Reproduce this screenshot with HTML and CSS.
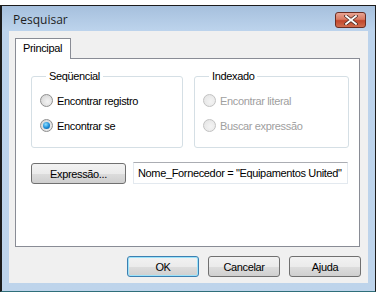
FILE: index.html
```html
<!DOCTYPE html>
<html lang="pt">
<head>
    <meta charset="UTF-8">
    <title>Pesquisar</title>
    <link rel="stylesheet" href="styles.css">
</head>
<body>
    <div class="window">
        <div class="titlebar">
            <span class="title">Pesquisar</span>
            <span class="close">
                <svg width="14" height="10" viewBox="0 0 14 10">
                    <path d="M2 1 L12 9 M12 1 L2 9" stroke="#4a2a22" stroke-width="3.4" stroke-linecap="square"/>
                    <path d="M2 1 L12 9 M12 1 L2 9" stroke="#fff" stroke-width="1.8" stroke-linecap="square"/>
                </svg>
            </span>
        </div>
        <div class="client">
            <div class="tabs">
                <div class="tab">Principal</div>
            </div>
            <div class="tab-page">
                <div class="groups">
                    <fieldset class="group">
                        <legend>Seqüencial</legend>
                        <label class="option"><span class="radio"></span>Encontrar registro</label>
                        <label class="option"><span class="radio checked"></span>Encontrar se</label>
                    </fieldset>
                    <fieldset class="group disabled">
                        <legend>Indexado</legend>
                        <label class="option"><span class="radio"></span>Encontrar literal</label>
                        <label class="option"><span class="radio"></span>Buscar expressão</label>
                    </fieldset>
                </div>
                <div class="expr-row">
                    <button class="btn expr-btn">Expressão...</button>
                    <div class="expr-field">Nome_Fornecedor = "Equipamentos United"</div>
                </div>
            </div>
            <div class="actions">
                <button class="btn default">OK</button>
                <button class="btn">Cancelar</button>
                <button class="btn">Ajuda</button>
            </div>
        </div>
    </div>
</body>
</html>
```

FILE: styles.css
```css
body {
    margin: 0;
    background: #fff;
    font-family: "Liberation Sans", Arial, sans-serif;
    font-size: 11px;
    letter-spacing: -0.35px;
    color: #000;
}
.window {
    margin-top: 5px;
    width: 376px;
    height: 287px;
    box-sizing: border-box;
    border: 1px solid #1c1c1c;
    border-left-width: 2px;
    border-bottom-color: #2f6f7a;
    background: linear-gradient(#a6c0dd, #bcd3ec 24px, #bed4eb);
    display: flex;
    flex-direction: column;
    padding: 0 7px 8px 7px;
}
.titlebar {
    height: 25px;
    display: flex;
    align-items: center;
    justify-content: space-between;
}
.title {
    font-family: "Open Sans", "Liberation Sans", sans-serif;
    font-size: 12px;
    letter-spacing: 0;
    padding-left: 4px;
    padding-top: 1px;
    color: #1e1e1e;
}
.close {
    width: 31px;
    height: 16px;
    box-sizing: border-box;
    margin-top: 2px;
    margin-right: 2px;
    border: 1px solid #6b2d22;
    border-radius: 3px;
    background: linear-gradient(#e8a493, #d97a62 45%, #c2462b 55%, #d06e4f);
    display: flex;
    align-items: center;
    justify-content: center;
}
.client {
    flex: 1;
    background: #f0f0f0;
    padding: 7px 7px 0 6px;
    display: flex;
    flex-direction: column;
}
.tabs {
    display: flex;
    height: 20px;
}
.tab {
    width: 56px;
    box-sizing: border-box;
    border: 1px solid #898c95;
    border-bottom: none;
    background: #fff;
    padding: 3px 0 0 7px;
    position: relative;
    z-index: 1;
    height: 21px;
}
.tab-page {
    height: 189px;
    box-sizing: border-box;
    border: 1px solid #898c95;
    background: #fff;
    padding: 11px 0 0 15px;
    margin-right: 1px;
}
.groups {
    display: flex;
    gap: 11px;
}
.group {
    margin: 0;
    width: 152px;
    height: 78px;
    box-sizing: border-box;
    border: 1px solid #d5dfe5;
    border-radius: 3px;
    padding: 12px 0 0 8px;
}
.group + .group {
    width: 155px;
}
.group legend {
    padding: 0 3px;
    margin-left: 6px;
    line-height: 12px;
}
.option {
    display: flex;
    align-items: center;
    height: 13px;
    margin-bottom: 12px;
}
.radio {
    width: 13px;
    height: 13px;
    box-sizing: border-box;
    border-radius: 50%;
    border: 1px solid #8f8f8f;
    background: radial-gradient(circle at 60% 60%, #f4f4f4, #cfcfcf);
    margin-right: 4px;
    position: relative;
}
.radio.checked::after {
    content: "";
    position: absolute;
    left: 2px;
    top: 2px;
    width: 7px;
    height: 7px;
    border-radius: 50%;
    background: radial-gradient(circle at 40% 35%, #8ee0ff, #1b8ad6 55%, #0a4f8a);
}
.group.disabled {
    color: #a0a0a0;
}
.group.disabled legend {
    color: #000;
}
.group.disabled .radio {
    border-color: #c2c2c2;
    background: radial-gradient(circle at 60% 60%, #f4f4f4, #e2e2e2);
}
.expr-row {
    display: flex;
    gap: 7px;
    margin-top: 14px;
}
.btn {
    font-family: inherit;
    font-size: 11px;
    letter-spacing: inherit;
    color: #000;
    height: 21px;
    box-sizing: border-box;
    border: 1px solid #707070;
    border-radius: 3px;
    background: linear-gradient(#f2f2f2, #ebebeb 50%, #dddddd 51%, #cfcfcf);
    padding: 0;
}
.expr-btn {
    width: 95px;
    margin-top: 1px;
}
.expr-field {
    width: 215px;
    height: 22px;
    box-sizing: border-box;
    border: 1px solid #e3e9ef;
    border-top-color: #abadb3;
    padding: 4px 0 0 4px;
    white-space: nowrap;
    overflow: hidden;
}
.actions {
    display: flex;
    justify-content: flex-end;
    gap: 9px;
    margin-top: 9px;
}
.actions .btn {
    width: 72px;
}
.btn.default {
    border-color: #3c7fb1;
    box-shadow: inset 0 0 0 1px #9ce3fa;
}
```
